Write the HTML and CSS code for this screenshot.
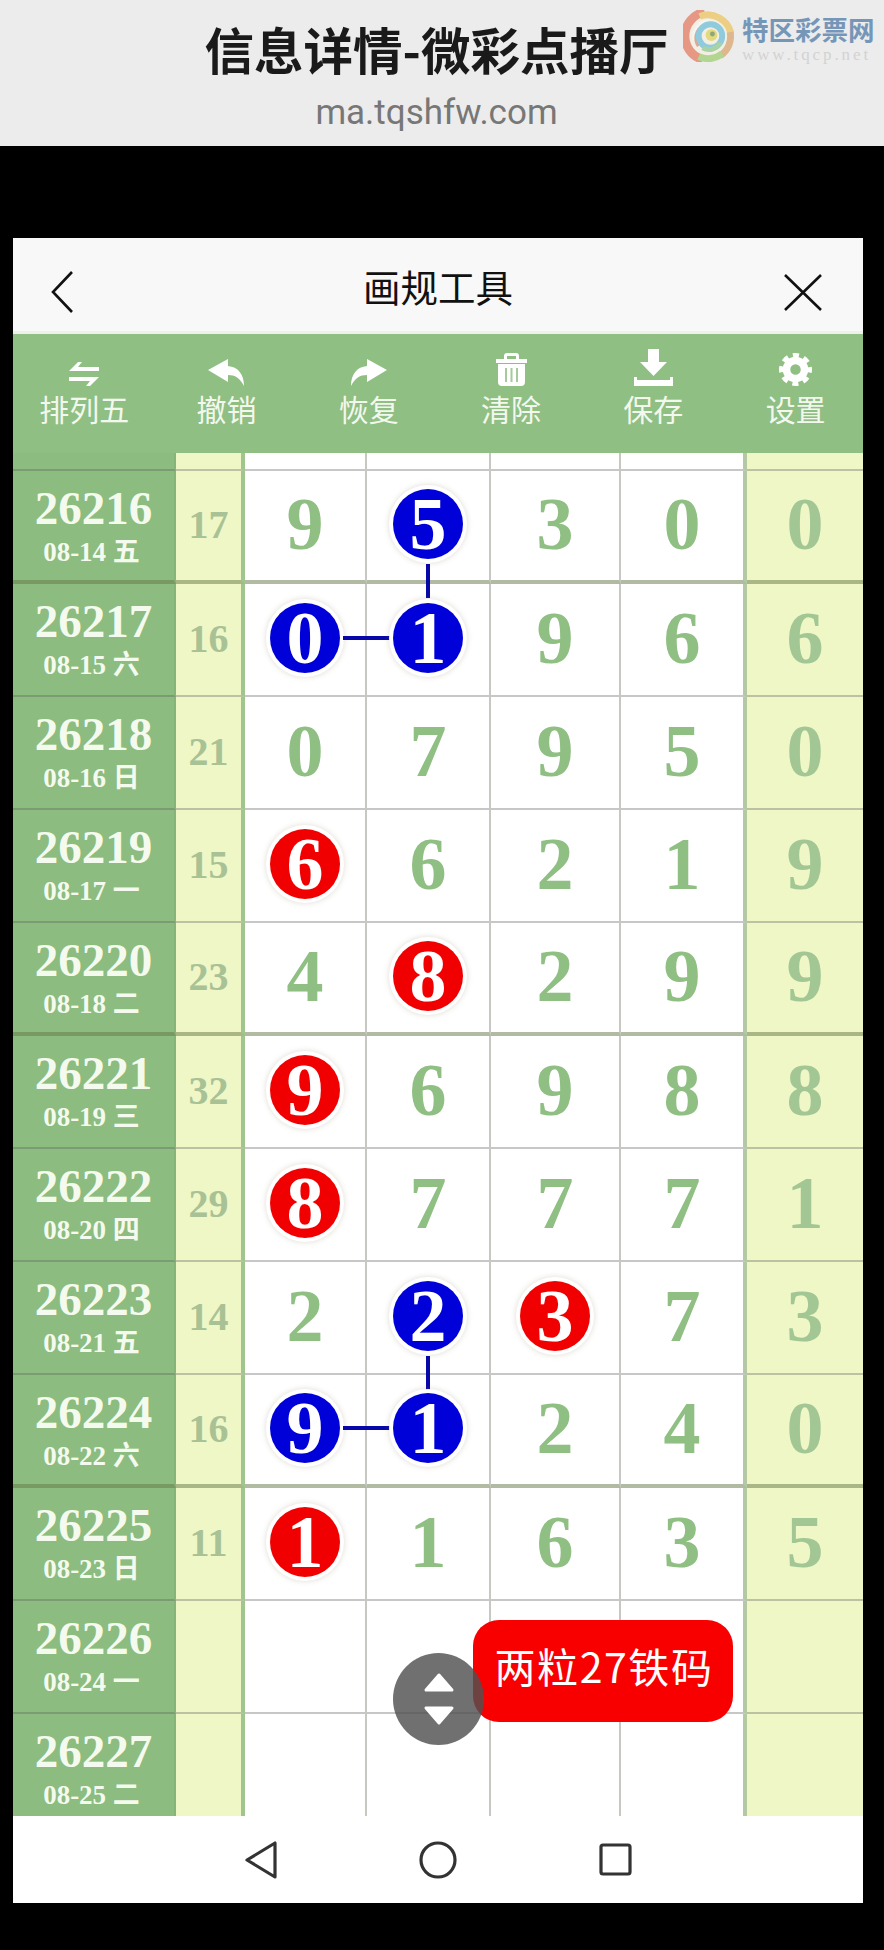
FILE: index.html
```html
<!DOCTYPE html>
<html lang="zh">
<head>
<meta charset="utf-8">
<title>画规工具</title>
<link rel="stylesheet" href="styles.css">
</head>
<body>
<header class="browser-top">
  <div class="page-title">信息详情-微彩点播厅</div>
  <div class="page-url">ma.tqshfw.com</div>
  <div class="watermark">
    <svg class="wm-logo" viewBox="0 0 52 52">
      <circle cx="26" cy="26" r="26" fill="#f4efe2"/>
      <path d="M20 50 A25 25 0 0 1 22 1.5" fill="none" stroke="#e58a72" stroke-width="9"/>
      <path d="M17 6 A24 24 0 0 1 49 24" fill="none" stroke="#eccb72" stroke-width="7"/>
      <path d="M48 22 A23 23 0 0 1 38 46" fill="none" stroke="#dcae7e" stroke-width="7"/>
      <path d="M40 44 A23 23 0 0 1 16 47" fill="none" stroke="#a9d182" stroke-width="7"/>
      <path d="M12 30 A15 15 0 0 1 27 11" fill="none" stroke="#f8f6f0" stroke-width="4"/>
      <path d="M16 36 A14 14 0 0 1 17 19" fill="none" stroke="#de9a86" stroke-width="4"/>
      <circle cx="28" cy="26" r="12" fill="none" stroke="#7fc6da" stroke-width="6"/>
      <path d="M38 33 A13 13 0 0 1 20 38" fill="none" stroke="#9ccf9a" stroke-width="5"/>
      <circle cx="29" cy="25" r="6" fill="#e2d769"/>
      <circle cx="30" cy="24" r="2.5" fill="#7b9a70"/>
    </svg>
    <div class="wm-text">
      <div class="wm-name">特区彩票网</div>
      <div class="wm-site">www.tqcp.net</div>
    </div>
  </div>
</header>

<main class="frame">
  <div class="titlebar">
    <svg class="tb-back" width="24" height="42" viewBox="0 0 24 42"><path d="M22 1 L3 21 L22 41" fill="none" stroke="#111" stroke-width="2.6"/></svg>
    <h1 class="tb-title">画规工具</h1>
    <svg class="tb-close" width="38" height="37" viewBox="0 0 38 37"><path d="M1 1 L37 36 M37 1 L1 36" fill="none" stroke="#111" stroke-width="2.6"/></svg>
  </div>

  <nav class="toolbar">
    <div class="tool">
      <svg class="tool-icon" width="30" height="24" viewBox="0 0 30 24"><path d="M0 9 L9 0 H13 L9 5 H30 V9 Z M0 15 H30 L21 24 H17 L21 19 H0 Z" fill="#fff"/></svg>
      <span>排列五</span>
    </div>
    <div class="tool">
      <svg class="tool-icon" width="36" height="27" viewBox="0 0 36 27"><path d="M0 11 L20 0 V7 C30 8 36 15 36 27 C32 19 27 16 20 16 V23 Z" fill="#fff"/></svg>
      <span>撤销</span>
    </div>
    <div class="tool">
      <svg class="tool-icon" width="36" height="27" viewBox="0 0 36 27"><path d="M36 11 L16 0 V7 C6 8 0 15 0 27 C4 19 9 16 16 16 V23 Z" fill="#fff"/></svg>
      <span>恢复</span>
    </div>
    <div class="tool">
      <svg class="tool-icon" width="31" height="33" viewBox="0 0 31 33"><path d="M8 6 V3 Q8 0 11 0 H20 Q23 0 23 3 V6 H31 V10 H0 V6 Z M11 6 H20 V3 H11 Z M2 11 H29 V29 Q29 33 25 33 H6 Q2 33 2 29 Z" fill="#fff" fill-rule="evenodd"/><path d="M10 15 V29 M15.500 15 V29 M21 15 V29" stroke="#a7c99c" stroke-width="2"/></svg>
      <span>清除</span>
    </div>
    <div class="tool">
      <svg class="tool-icon" width="39" height="37" viewBox="0 0 39 37"><path d="M14 0 H25 V13 H33 L19.5 27 L6 13 H14 Z M0 28 H3 V31 H36 V28 H39 V37 H0 Z" fill="#fff"/></svg>
      <span>保存</span>
    </div>
    <div class="tool">
      <svg class="tool-icon" width="33" height="33" viewBox="0 0 33 33"><circle cx="16.5" cy="16.5" r="9" fill="none" stroke="#fff" stroke-width="7.5"/><circle cx="16.5" cy="16.5" r="13.5" fill="none" stroke="#fff" stroke-width="6" stroke-dasharray="5.8 4.8" stroke-dashoffset="2.9"/></svg>
      <span>设置</span>
    </div>
  </nav>

  <section class="chart">
    <div class="row stub"><div class="c-date"></div><div class="c-sum"></div><div class="c c1"></div><div class="c c2"></div><div class="c c3"></div><div class="c c4"></div><div class="c c5"></div></div>

    <div class="row thick">
      <div class="c-date"><b>26216</b><small>08-14 五</small></div><div class="c-sum">17</div>
      <div class="c c1">9</div><div class="c c2"><span class="ball blue link-down">5</span></div><div class="c c3">3</div><div class="c c4">0</div><div class="c c5">0</div>
    </div>
    <div class="row">
      <div class="c-date"><b>26217</b><small>08-15 六</small></div><div class="c-sum">16</div>
      <div class="c c1"><span class="ball blue link-right">0</span></div><div class="c c2"><span class="ball blue">1</span></div><div class="c c3">9</div><div class="c c4">6</div><div class="c c5">6</div>
    </div>
    <div class="row">
      <div class="c-date"><b>26218</b><small>08-16 日</small></div><div class="c-sum">21</div>
      <div class="c c1">0</div><div class="c c2">7</div><div class="c c3">9</div><div class="c c4">5</div><div class="c c5">0</div>
    </div>
    <div class="row">
      <div class="c-date"><b>26219</b><small>08-17 一</small></div><div class="c-sum">15</div>
      <div class="c c1"><span class="ball red">6</span></div><div class="c c2">6</div><div class="c c3">2</div><div class="c c4">1</div><div class="c c5">9</div>
    </div>
    <div class="row thick">
      <div class="c-date"><b>26220</b><small>08-18 二</small></div><div class="c-sum">23</div>
      <div class="c c1">4</div><div class="c c2"><span class="ball red">8</span></div><div class="c c3">2</div><div class="c c4">9</div><div class="c c5">9</div>
    </div>
    <div class="row">
      <div class="c-date"><b>26221</b><small>08-19 三</small></div><div class="c-sum">32</div>
      <div class="c c1"><span class="ball red">9</span></div><div class="c c2">6</div><div class="c c3">9</div><div class="c c4">8</div><div class="c c5">8</div>
    </div>
    <div class="row">
      <div class="c-date"><b>26222</b><small>08-20 四</small></div><div class="c-sum">29</div>
      <div class="c c1"><span class="ball red">8</span></div><div class="c c2">7</div><div class="c c3">7</div><div class="c c4">7</div><div class="c c5">1</div>
    </div>
    <div class="row">
      <div class="c-date"><b>26223</b><small>08-21 五</small></div><div class="c-sum">14</div>
      <div class="c c1">2</div><div class="c c2"><span class="ball blue link-down">2</span></div><div class="c c3"><span class="ball red">3</span></div><div class="c c4">7</div><div class="c c5">3</div>
    </div>
    <div class="row thick">
      <div class="c-date"><b>26224</b><small>08-22 六</small></div><div class="c-sum">16</div>
      <div class="c c1"><span class="ball blue link-right">9</span></div><div class="c c2"><span class="ball blue">1</span></div><div class="c c3">2</div><div class="c c4">4</div><div class="c c5">0</div>
    </div>
    <div class="row">
      <div class="c-date"><b>26225</b><small>08-23 日</small></div><div class="c-sum">11</div>
      <div class="c c1"><span class="ball red">1</span></div><div class="c c2">1</div><div class="c c3">6</div><div class="c c4">3</div><div class="c c5">5</div>
    </div>
    <div class="row">
      <div class="c-date"><b>26226</b><small>08-24 一</small></div><div class="c-sum"></div>
      <div class="c c1"></div><div class="c c2"></div><div class="c c3"></div><div class="c c4"></div><div class="c c5"></div>
    </div>
    <div class="row">
      <div class="c-date"><b>26227</b><small>08-25 二</small></div><div class="c-sum"></div>
      <div class="c c1"></div><div class="c c2"></div><div class="c c3"></div><div class="c c4"></div><div class="c c5"></div>
    </div>

    <div class="note">两粒27铁码</div>
    <div class="scroll-fab">
      <svg width="32" height="54" viewBox="0 0 32 54"><path d="M16 3 L29 18 H3 Z M3 36 H29 L16 51 Z" fill="#fff" stroke="#fff" stroke-width="3" stroke-linejoin="round"/></svg>
    </div>
  </section>

  <footer class="navbar">
    <span class="nav-slot"><svg width="34" height="38" viewBox="0 0 34 38"><path d="M31 2 V36 L3 19 Z" fill="none" stroke="#333" stroke-width="3.2" stroke-linejoin="round"/></svg></span>
    <span class="nav-slot"><svg width="38" height="38" viewBox="0 0 38 38"><circle cx="19" cy="19" r="17" fill="none" stroke="#333" stroke-width="3.2"/></svg></span>
    <span class="nav-slot"><svg width="33" height="33" viewBox="0 0 33 33"><rect x="2" y="2" width="29" height="29" rx="2" fill="none" stroke="#333" stroke-width="3.2"/></svg></span>
  </footer>
</main>
</body>
</html>
```

FILE: styles.css
```css
* { box-sizing: border-box; }
html, body { margin: 0; padding: 0; }
body {
  background: #000;
  height: 1950px;
  overflow: hidden;
  font-family: "Noto Sans CJK SC", sans-serif;
}

/* top strip */
.browser-top {
  position: relative;
  height: 146px;
  background: #ececec;
  display: flex;
  flex-direction: column;
  align-items: center;
  padding: 13px 11px 0 0;
}
.page-title {
  font-size: 49.500px;
  line-height: 72px;
  font-weight: 700;
  color: #1a1a1a;
}
.page-url {
  font-family: Roboto, sans-serif;
  font-size: 35px;
  line-height: 42px;
  margin-top: 7px;
  color: #777;
}
.watermark {
  position: absolute;
  left: 683px;
  top: 10px;
  display: flex;
  gap: 8px;
  opacity: .85;
}
.wm-logo { width: 51px; height: 52px; }
.wm-text { padding-top: 3px; }
.wm-name {
  font-size: 26.500px;
  line-height: 32px;
  font-weight: 700;
  color: #6288b0;
  white-space: nowrap;
}
.wm-site {
  font-family: "Liberation Serif", serif;
  font-size: 17px;
  line-height: 15px;
  letter-spacing: 2.9px;
  color: #cfcfcf;
  margin-top: 2px;
}

/* frame */
.frame {
  width: 850px;
  margin: 92px 0 0 13px;
}
.titlebar {
  height: 96px;
  background: #f8f8f8;
  border-bottom: 3px solid #eef0ec;
  display: grid;
  grid-template-columns: 1fr auto 1fr;
  align-items: center;
  padding: 0 41px;
}
.tb-back { display: block; margin: 15px 0 0 -4px; }
.tb-close { display: block; margin: 15px 0 0; justify-self: end; }
.tb-title {
  margin: 3px 0 0;
  font-size: 37.500px;
  line-height: 50px;
  font-weight: 400;
  color: #111;
}

/* toolbar */
.toolbar {
  height: 119px;
  background: #8fbf82;
  display: grid;
  grid-template-columns: repeat(6, 142.300px);
  position: relative;
  z-index: 2;
}
.tool {
  display: flex;
  flex-direction: column;
  align-items: center;
  justify-content: flex-end;
  padding-bottom: 25px;
  color: #f3f8ee;
  font-size: 30px;
  line-height: 40px;
}
.tool-icon { display: block; margin-bottom: 2px; }

/* chart */
.chart {
  position: relative;
  height: 1363px;
  overflow: hidden;
  background: #fff;
}
.row {
  display: grid;
  grid-template-columns: 163px 69px 122px 124px 130px 126px 116px;
  height: 113px;
}
.row.stub { height: 18px; }
.row > div {
  border-bottom: 2px solid rgba(90, 90, 90, .34);
}
.row.thick > div {
  border-bottom: 4px solid rgba(100, 120, 70, .5);
}
.c-date {
  background: #8cbc7f;
  color: #f4faee;
  border-right: 2px solid #86b57a;
  display: flex;
  flex-direction: column;
  align-items: center;
  font-family: "Liberation Serif", "Noto Sans CJK SC", serif;
  padding-top: 10px;
}
.c-date b {
  font-size: 47px;
  line-height: 54px;
  font-weight: 700;
}
.c-date small {
  font-size: 27px;
  line-height: 35px;
  font-weight: 700;
  margin-left: -4px;
}
.c-sum {
  background: #eff7c6;
  color: #a9c295;
  border-right: 4px solid #a0c58f;
  font: 700 40px/1 "Liberation Serif", serif;
  display: flex;
  align-items: center;
  justify-content: center;
  padding-bottom: 2px;
}
.c {
  color: #8fbf82;
  font: 700 74px/1 "Liberation Serif", serif;
  display: flex;
  align-items: center;
  justify-content: center;
  padding-bottom: 4px;
  background: #fff;
  border-right: 2px solid #c6c8c2;
}
.c4 { border-right: 4px solid #b5c8a4; }
.c5 { background: #eff7c6; color: #a3c794; border-right: 0; }

.ball {
  position: relative;
  width: 70px;
  height: 70px;
  border-radius: 50%;
  color: #fff;
  display: flex;
  align-items: center;
  justify-content: center;
  box-shadow: 0 0 0 4px #fff, 0 0 5px 5px rgba(120, 110, 80, .18);
}
.ball.blue { background: #0000d9; }
.ball.red { background: #f00000; }
.link-down::after {
  content: "";
  position: absolute;
  left: 33px;
  top: 75px;
  width: 4px;
  height: 34px;
  background: #0808a8;
}
.link-right::after {
  content: "";
  position: absolute;
  left: 73px;
  top: 33px;
  width: 47px;
  height: 4px;
  background: #0808a8;
}

.note {
  position: absolute;
  left: 460px;
  top: 1167px;
  width: 260px;
  height: 102px;
  border-radius: 26px;
  background: #f80000;
  color: #fff;
  font-size: 41px;
  line-height: 48px;
  padding: 21px 0 0 2px;
  text-align: center;
  letter-spacing: 1.600px;
  white-space: nowrap;
}
.scroll-fab {
  position: absolute;
  left: 380px;
  top: 1200px;
  width: 91px;
  height: 92px;
  border-radius: 50%;
  background: rgba(80, 80, 80, .82);
  display: flex;
  align-items: center;
  justify-content: center;
}

/* nav */
.navbar {
  height: 87px;
  background: #fff;
  display: flex;
  justify-content: center;
  align-items: center;
}
.nav-slot {
  width: 177px;
  display: flex;
  justify-content: center;
}
.nav-slot svg { display: block; }
```
